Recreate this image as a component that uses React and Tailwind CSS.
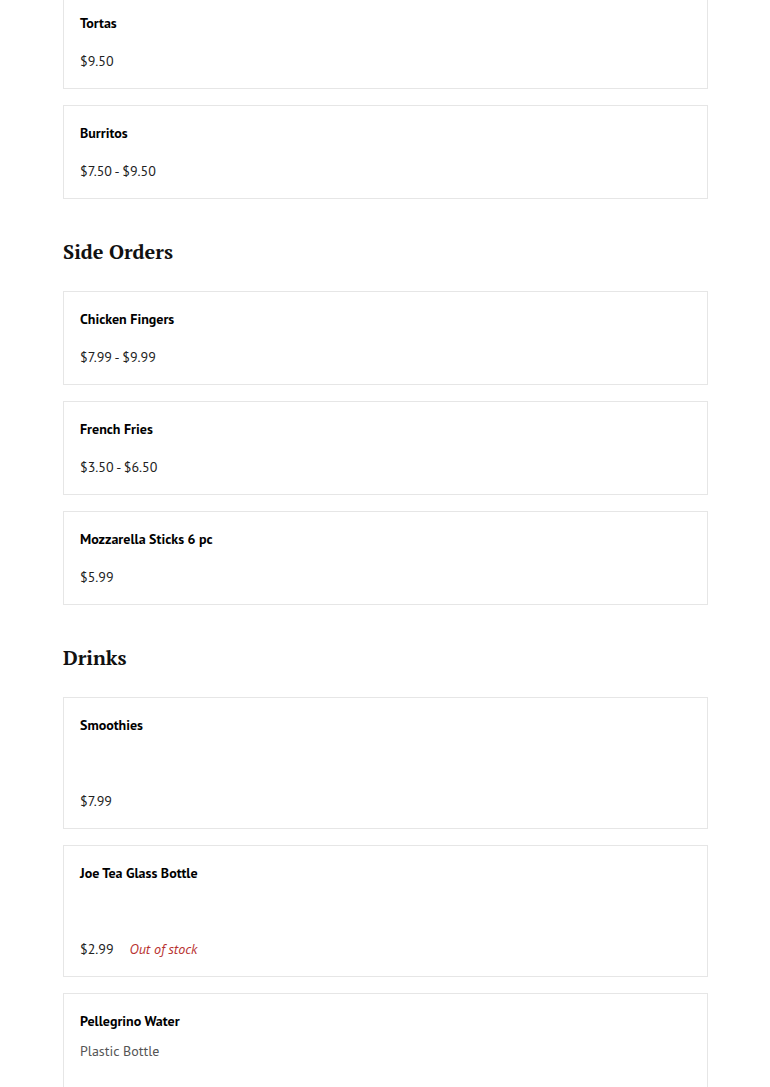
const SECTIONS = [
  {
    title: null,
    items: [
      { name: 'Tortas', price: '$9.50' },
      { name: 'Burritos', price: '$7.50 - $9.50' },
    ],
  },
  {
    title: 'Side Orders',
    items: [
      { name: 'Chicken Fingers', price: '$7.99 - $9.99' },
      { name: 'French Fries', price: '$3.50 - $6.50' },
      { name: 'Mozzarella Sticks 6 pc', price: '$5.99' },
    ],
  },
  {
    title: 'Drinks',
    items: [
      { name: 'Smoothies', desc: '', price: '$7.99' },
      { name: 'Joe Tea Glass Bottle', desc: '', price: '$2.99', soldOut: true },
      { name: 'Pellegrino Water', desc: 'Plastic Bottle', price: '$1.99' },
    ],
  },
]

function MenuItem({ item }) {
  return (
    <div className="border border-[#e6e6e6] bg-white px-4 pt-[17px] pb-[17px] mb-4">
      <p className="text-[14px] leading-[20px] font-bold text-black">{item.name}</p>
      {item.desc !== undefined && (
        <p className="pt-[10px] pb-[8px] h-[38px] text-[14px] leading-[20px] text-[#555]">{item.desc}</p>
      )}
      <div className="mt-[18px] flex items-center text-[14px] leading-[20px] text-[#222]">
        <span>{item.price}</span>
        {item.soldOut && <span className="ml-4 italic text-[#b83230]">Out of stock</span>}
      </div>
    </div>
  )
}

export default function App() {
  return (
    <div className="min-h-screen bg-white overflow-hidden" style={{ fontFamily: '"PT Sans", "Liberation Sans", sans-serif' }}>
      <div className="w-[645px] ml-[63px] -mt-[5px]">
        {SECTIONS.map((section, i) => (
          <div key={i}>
            {section.title && (
              <h2
                className="mt-[37px] mb-[23px] text-[20px] leading-[32px] font-bold text-[#111]"
                style={{ fontFamily: '"PT Serif", "Liberation Serif", serif' }}
              >
                {section.title}
              </h2>
            )}
            {section.items.map((item) => (
              <MenuItem key={item.name} item={item} />
            ))}
          </div>
        ))}
      </div>
    </div>
  )
}
